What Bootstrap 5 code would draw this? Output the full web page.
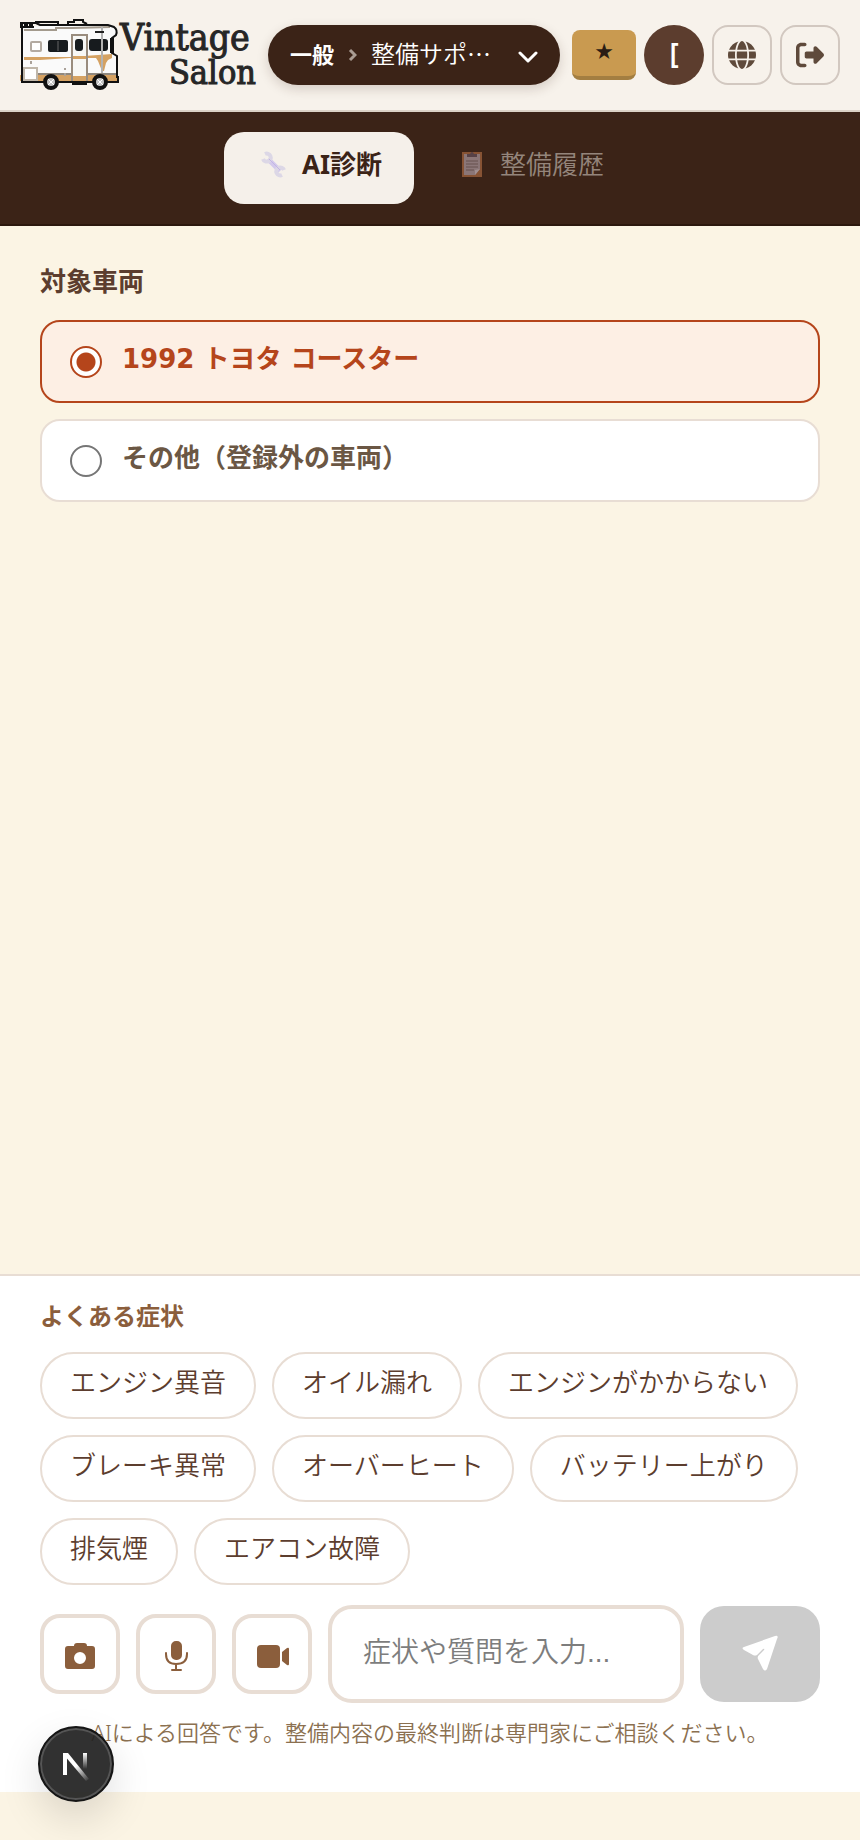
<!DOCTYPE html>
<html lang="ja">
<head>
<meta charset="utf-8">
<meta name="viewport" content="width=device-width, initial-scale=1">
<title>Vintage Salon - 整備サポート</title>
<link href="https://cdn.jsdelivr.net/npm/bootstrap@5.3.0/dist/css/bootstrap.min.css" rel="stylesheet">
<style>
:root { --cream: #fbf4e4; --paper: #f7f2eb; --cocoa: #3b2317; --line: #e8ddd4; --brown: #8b5e3c; --rust: #b5451b; }
body { background: var(--cream); color: var(--cocoa); font-family: "Noto Sans", "Noto Sans CJK JP", sans-serif; font-size: 26px; line-height: 36px; font-weight: 350; }
button, input { font-family: inherit; font-weight: inherit; }
.top-bar { background: var(--paper); border-bottom: 2px solid #dbd2c6; height: 112px; padding: 0 20px; gap: 8px; }
.brand-link { width: 236px; margin-right: 4px; color: #262626; }
.brand-link svg { width: 100px; height: 72px; }
.brand-words { font-family: "DejaVu Serif Condensed", "DejaVu Serif", serif; font-stretch: condensed; line-height: 35px; font-weight: 400; -webkit-text-stroke: 1px #262626; }
.brand-first { font-size: 37px; }
.brand-second { font-size: 34px; }
.crumb-pill { background: var(--cocoa); color: #fff; border: 0; height: 60px; border-radius: 30px; padding: 0 22px 4px; gap: 14px; font-family: "Noto Sans CJK JP", sans-serif; font-size: 24px; box-shadow: 0 4px 12px rgba(59,35,23,.18); margin-right: 4px; }
.crumb-pill strong { font-size: 22px; font-weight: 700; }
.star-btn { width: 64px; height: 50px; padding: 0 0 2px; background: #c99a50; border: 0; border-bottom: 4px solid #a37e41; border-radius: 8px; color: #2b1d14; font: 22px/36px "DejaVu Sans", sans-serif; }
.avatar-btn { width: 60px; height: 60px; padding: 0 0 4px; background: #5c3d2e; color: #fff; border: 0; font-size: 28px; font-weight: 600; }
.tool-btn { width: 60px; height: 60px; padding: 0; background: transparent; border: 2px solid #d2c8c0; border-radius: 16px; color: #5f4a3b; }
.tab-strip { background: var(--cocoa); border-bottom: 2px solid #2c180e; height: 114px; padding: 20px; gap: 8px; }
.tab-btn { height: 72px; padding: 0 32px 8px; gap: 10px; border: 0; border-radius: 20px; background: transparent; color: #94857b; }
.tab-btn.is-current { background: #f5f0ea; color: var(--cocoa); font-weight: 700; }
.tab-btn svg { width: 36px; height: 28px; }
.main-area { padding: 37px 40px; }
.section-title { font-size: 26px; line-height: 36px; font-weight: 700; color: #5c3d2e; margin: 0 0 21px; }
.pick-card { height: 83px; padding: 0 28px; gap: 20px; background: #fff; border: 2px solid var(--line); border-radius: 20px; color: #6b5744; font-family: "DejaVu Sans", "Noto Sans CJK JP", sans-serif; font-weight: 700; }
.pick-card span { padding-bottom: 6px; }
.pick-card.is-picked { background: #fdefe4; border-color: var(--rust); color: var(--rust); }
.pick-card input { appearance: none; width: 32px; height: 32px; margin: 0; border: 2px solid #767676; border-radius: 50%; background: #fff; }
.pick-card input:checked { border-color: var(--rust); background: radial-gradient(circle, var(--rust) 9px, #fff 10px); }
.ask-panel { background: #fff; border-top: 2px solid var(--line); padding: 22px 40px 44px; margin-bottom: 48px; }
.ask-title { font-size: 24px; line-height: 36px; font-weight: 700; color: var(--brown); margin: 0 0 18px; }
.chip-btn { height: 67px; padding: 0 28px 8px; background: #fff; border: 2px solid var(--line); border-radius: 34px; color: #5c3d2e; }
.media-btn { width: 80px; height: 80px; padding: 0; background: #fff; border: 4px solid var(--line); border-radius: 20px; color: var(--brown); }
.ask-input { min-width: 0; height: 98px; padding: 0 31px 2px; border: 4px solid var(--line); border-radius: 24px; font-family: "Liberation Sans", "Noto Sans CJK JP", sans-serif; font-size: 28px; }
.ask-input::placeholder { color: #7d7d7d; opacity: 1; }
.send-btn { width: 120px; height: 96px; padding: 0 0 6px; background: #ccc; border: 0; border-radius: 24px; color: #fff; }
.note-line { font-size: 22px; line-height: 32px; color: #8b7050; margin: 13px 0 0; }
.dev-badge { left: 38px; bottom: 38px; width: 76px; height: 76px; padding: 0; border: 2px solid #151515; border-radius: 50%; background: rgba(32,32,32,.92); box-shadow: inset 0 0 0 2px #555, 0 16px 40px rgba(0,0,0,.13); }
</style>
</head>
<body class="d-flex flex-column min-vh-100">
<header class="top-bar d-flex align-items-center">
  <a href="#" class="brand-link d-flex align-items-center flex-shrink-0 text-decoration-none" aria-label="Vintage Salon">
    <svg class="flex-shrink-0" viewBox="0 0 100 72" aria-hidden="true">
      <path d="M3 8L50 6H88L96 10L97 16L93 22V34L97 38L98 62H3z" fill="#fafafa"/>
      <path d="M0 56H97V62H0z" fill="#d5a263"/>
      <path d="M4 38H50L92 35V39L88 41L86 44L84 52H82L78 42L76 39H50L20 41H4z" fill="#d5a263"/>
      <path d="M4 11H36V9H52L90 8" stroke="#a39a8d" stroke-width="2" fill="none"/>
      <path d="M3 55H96" stroke="#8f887f" stroke-width="2"/>
      <path d="M0 4H16L20 6H48L88 6L94 8Q98 11 96 16L92 19V34L97 37V58H98V63H2V8H0M0 8H14M15 3H38V6M48 5V3H54V1H63V3L67 5M5 4V9M10 4V9" fill="none" stroke="#111" stroke-width="2"/>
      <path d="M0 6H14" stroke="#111" stroke-width="3" stroke-dasharray="3 2"/>
      <rect x="11" y="23" width="10" height="9" rx="1" fill="#fff" stroke="#b3aaa1" stroke-width="2"/>
      <rect x="28" y="21" width="20" height="12" rx="2" fill="#171b1e"/><path d="M38 22V32" stroke="#666"/>
      <path d="M52 62V16H67V62" fill="#f7f7f5" stroke="#998c7e" stroke-width="2"/>
      <path d="M53 37H66V40H53zM53 57H66V62H53z" fill="#d5a263"/>
      <rect x="55" y="20" width="8" height="12" rx="3" fill="#171b1e"/>
      <rect x="69" y="20" width="19" height="12" rx="3" fill="#171b1e"/><path d="M82 8V54" stroke="#b3b3b3" stroke-width="2"/>
      <path d="M75 13H84" stroke="#222" stroke-width="2"/><path d="M92 19V34" stroke="#111" stroke-width="4"/>
      <path d="M4 49H17V61H4z" fill="#fff" stroke="#c0b7aa" stroke-width="2"/>
      <path d="M11 42V45M45 49V51M45 54V57" stroke="#aaa29a" stroke-width="2"/>
      <path d="M52 64H67" stroke="#111" stroke-width="4"/>
      <g fill="#c4c4c4" stroke="#111" stroke-width="4"><circle cx="31" cy="63" r="6"/><circle cx="80" cy="63" r="6"/></g>
      <path d="M28 60L34 66M34 60L28 66M77 60L83 66M83 60L77 66" stroke="#fff"/>
    </svg>
    <span class="brand-words flex-grow-1"><span class="brand-first d-block">Vintage</span><span class="brand-second d-block text-end">Salon</span></span>
  </a>
  <button type="button" class="crumb-pill d-flex align-items-center flex-grow-1">
    <strong>一般</strong>
    <svg class="mt-1" width="9" height="14" viewBox="0 0 9 14" fill="none" stroke="#aa9d94" stroke-width="3" aria-hidden="true"><path d="M2 2L7 7L2 12"/></svg>
    <span>整備サポ…</span>
    <svg class="ms-auto mt-2" width="20" height="14" viewBox="0 0 20 14" fill="none" stroke="#fff" stroke-width="3" stroke-linecap="round" stroke-linejoin="round" aria-hidden="true"><path d="M2 3L10 11L18 3"/></svg>
  </button>
  <button type="button" class="star-btn" aria-label="お気に入り">★</button>
  <button type="button" class="avatar-btn rounded-circle">[</button>
  <button type="button" class="tool-btn d-flex align-items-center justify-content-center" aria-label="言語">
    <svg width="28" height="28" viewBox="0 0 512 512" fill="currentColor" aria-hidden="true"><path d="M352 256c0 22.200-1.200 43.600-3.300 64H163.300c-2.200-20.400-3.300-41.800-3.300-64s1.200-43.600 3.300-64H348.700c2.200 20.400 3.300 41.800 3.300 64zm28.800-64H503.900c5.300 20.500 8.100 41.900 8.100 64s-2.800 43.500-8.100 64H380.800c2.100-20.600 3.200-42 3.200-64s-1.100-43.400-3.200-64zm112.600-32H376.700c-10-63.900-29.800-117.400-55.300-151.600c78.300 20.700 142 77.500 171.900 151.600zm-149.100 0H167.700c6.100-36.400 15.500-68.600 27-94.700c10.500-23.600 22.200-40.700 33.500-51.500C239.400 3.200 248.700 0 256 0s16.600 3.200 27.800 13.800c11.300 10.800 23 27.900 33.500 51.500c11.600 26 20.900 58.200 27 94.700zm-209 0H18.600C48.600 85.900 112.200 29.100 190.600 8.400C165.100 42.600 145.300 96.100 135.300 160zM8.100 192H131.200c-2.100 20.600-3.200 42-3.200 64s1.100 43.400 3.200 64H8.100C2.800 299.500 0 278.100 0 256s2.800-43.500 8.100-64zM194.700 446.600c-11.600-26-20.900-58.200-27-94.600H344.300c-6.100 36.400-15.500 68.600-27 94.600c-10.500 23.600-22.200 40.700-33.500 51.500C272.600 508.800 263.300 512 256 512s-16.600-3.200-27.800-13.800c-11.300-10.800-23-27.900-33.500-51.500zM135.300 352c10 63.900 29.800 117.400 55.300 151.600C112.200 482.900 48.600 426.100 18.600 352H135.300zm358.100 0c-30 74.100-93.600 130.900-171.900 151.600c25.500-34.200 45.200-87.700 55.300-151.600H493.400z"/></svg>
  </button>
  <button type="button" class="tool-btn d-flex align-items-center justify-content-center" aria-label="ログアウト">
    <svg width="28" height="28" viewBox="0 0 512 512" fill="currentColor" aria-hidden="true"><path d="M377.900 105.900L500.700 228.700c7.200 7.200 11.300 17.100 11.300 27.300s-4.100 20.100-11.300 27.300L377.900 406.100c-6.400 6.400-15 9.900-24 9.900c-18.700 0-33.900-15.200-33.900-33.900V320H192c-17.700 0-32-14.300-32-32V224c0-17.700 14.300-32 32-32H320V129.900c0-18.700 15.200-33.900 33.900-33.900c9 0 17.600 3.600 24 9.900zM160 96H96c-17.700 0-32 14.300-32 32V384c0 17.700 14.300 32 32 32h64c17.700 0 32 14.300 32 32s-14.300 32-32 32H96c-53 0-96-43-96-96V128C0 75 43 32 96 32h64c17.700 0 32 14.300 32 32s-14.300 32-32 32z"/></svg>
  </button>
</header>
<nav class="tab-strip d-flex justify-content-center" aria-label="整備メニュー">
  <button type="button" class="tab-btn is-current d-flex align-items-center" aria-current="page">
    <svg viewBox="0 0 36 28" fill="none" aria-hidden="true"><path d="M12 9L24 21" stroke="#d3c9ec" stroke-width="5"/><path d="M9 4A4 4 0 1 1 7 9M26 25A4 4 0 1 1 28 20" stroke="#dcd7e6" stroke-width="4"/><path d="M13 9L24 20" stroke="#c3b5e4" stroke-width="1"/></svg>
    <span>AI診断</span>
  </button>
  <button type="button" class="tab-btn d-flex align-items-center">
    <svg viewBox="0 0 36 28" aria-hidden="true"><path d="M8 2H28V27H8z" fill="#875334"/><path d="M10 4H26V19L21 25H10z" fill="#8b7677"/><path d="M21 25V20L26 19z" fill="#a18f90"/><path d="M13 7V4H16Q18 0 20 4H23V7z" fill="#574247"/><path d="M12 11H24M12 14H24M12 17H24M12 20H20" stroke="#66504f" stroke-width="1"/></svg>
    <span>整備履歴</span>
  </button>
</nav>
<main class="main-area flex-grow-1">
  <h1 class="section-title">対象車両</h1>
  <div class="d-grid gap-3">
    <label class="pick-card is-picked d-flex align-items-center"><input type="radio" name="vehicle" checked><span>1992 トヨタ コースター</span></label>
    <label class="pick-card d-flex align-items-center"><input type="radio" name="vehicle"><span>その他（登録外の車両）</span></label>
  </div>
</main>
<section class="ask-panel">
  <h2 class="ask-title">よくある症状</h2>
  <div class="d-flex flex-wrap gap-3">
    <button type="button" class="chip-btn">エンジン異音</button>
    <button type="button" class="chip-btn">オイル漏れ</button>
    <button type="button" class="chip-btn">エンジンがかからない</button>
    <button type="button" class="chip-btn">ブレーキ異常</button>
    <button type="button" class="chip-btn">オーバーヒート</button>
    <button type="button" class="chip-btn">バッテリー上がり</button>
    <button type="button" class="chip-btn">排気煙</button>
    <button type="button" class="chip-btn">エアコン故障</button>
  </div>
  <form class="d-flex align-items-center gap-3 pt-1 mt-3">
    <button type="button" class="media-btn flex-shrink-0" aria-label="写真"><svg width="32" height="32" viewBox="0 0 32 32" fill="currentColor" aria-hidden="true"><path fill-rule="evenodd" d="M10 5Q10 2 13 2H20Q23 2 23 5H28Q31 5 31 8V25Q31 28 28 28H4Q1 28 1 25V8Q1 5 4 5zM16 11A6 6 0 1 0 16 23A6 6 0 1 0 16 11z"/></svg></button>
    <button type="button" class="media-btn flex-shrink-0" aria-label="音声"><svg width="32" height="32" viewBox="0 0 32 32" fill="none" stroke="currentColor" stroke-width="2" stroke-linecap="round" aria-hidden="true"><rect x="12" y="1" width="9" height="17" rx="4" fill="currentColor"/><path d="M6 12V13Q6 23 16 23Q27 23 27 13V12M16 23V29M12 29H21"/></svg></button>
    <button type="button" class="media-btn flex-shrink-0" aria-label="動画"><svg width="34" height="32" viewBox="0 0 34 32" fill="currentColor" aria-hidden="true"><rect x="2" y="4" width="23" height="23" rx="4"/><path d="M27 11L32 7Q34 6 34 8V23Q34 25 32 24L27 20z"/></svg></button>
    <input type="text" class="ask-input flex-grow-1" placeholder="症状や質問を入力..." aria-label="症状や質問">
    <button type="submit" class="send-btn flex-shrink-0" aria-label="送信" disabled><svg width="36" height="36" viewBox="0 0 36 36" fill="currentColor" aria-hidden="true"><path d="M2 12L33 1Q37 0 35 4L25 34Q23 37 21 34L16 24Q15 22 17 20L22 15Q23 13 21 14L15 20Q13 21 11 20L2 15Q-1 13 2 12z"/></svg></button>
  </form>
  <p class="note-line text-center">AIによる回答です。整備内容の最終判断は専門家にご相談ください。</p>
</section>
<button type="button" class="dev-badge position-fixed" aria-label="開発ツール">
  <svg class="d-block" width="72" height="72" viewBox="0 0 72 72" fill="none" aria-hidden="true">
    <defs><linearGradient id="fadeA" x1="36" y1="38" x2="49" y2="53" gradientUnits="userSpaceOnUse"><stop offset="0" stop-color="#fff"/><stop offset="1" stop-color="#fff" stop-opacity="0"/></linearGradient><linearGradient id="fadeB" x1="0" y1="25" x2="0" y2="41" gradientUnits="userSpaceOnUse"><stop offset="0" stop-color="#fff"/><stop offset="1" stop-color="#fff" stop-opacity="0"/></linearGradient></defs>
    <path d="M23 25H27V47H23z" fill="#fff"/><path d="M23 25H28L49 51L46 53L24 27z" fill="url(#fadeA)"/><path d="M45 25V41" stroke="url(#fadeB)" stroke-width="4"/>
  </svg>
</button>
<script src="https://cdn.jsdelivr.net/npm/bootstrap@5.3.0/dist/js/bootstrap.bundle.min.js"></script>
</body>
</html>
